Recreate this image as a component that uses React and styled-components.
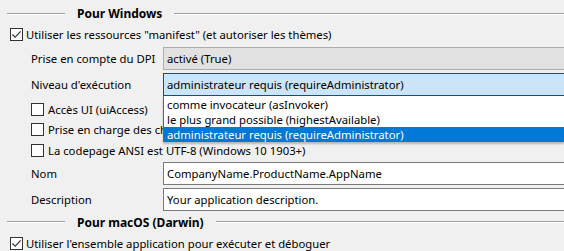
import React from "react";
import styled, { createGlobalStyle } from "styled-components";

const Global = createGlobalStyle`
  html, body { margin: 0; padding: 0; background: #f0f0f0; overflow: hidden; }
  body { font-family: "Noto Sans", "Open Sans", sans-serif; font-size: 11.3px; color: #000; }
`;

const Page = styled.div`
  position: relative;
  width: 100%;
  height: 251px;
  overflow: hidden;
  display: flex;
  flex-direction: column;
`;

const SectionHeader = styled.div`
  height: ${(p) => p.$h}px;
  display: flex;
  align-items: center;
  padding-left: 7px;
  gap: 12px;
  &::before, &::after {
    content: "";
    height: 0;
    border-top: 1px solid #a0a0a0;
    border-bottom: 1px solid #ffffff;
  }
  &::before { width: 58px; }
  &::after { flex: 1; }
`;

const HeaderText = styled.span`
  font-weight: 700;
  font-size: 12px;
  white-space: nowrap;
`;

const CheckRow = styled.label`
  display: flex;
  align-items: center;
  height: ${(p) => p.$h || 15}px;
  margin-top: ${(p) => p.$mt || 0}px;
  padding-left: ${(p) => p.$indent}px;
  gap: ${(p) => p.$gap || 3}px;
  white-space: nowrap;
  ${(p) => (p.$clip ? `width: ${p.$clip}px; box-sizing: border-box; overflow: hidden;` : "")}
`;

const Box = styled.span`
  width: 11px;
  height: 11px;
  border: 1px solid #333333;
  background: #ffffff;
  display: flex;
  align-items: center;
  justify-content: center;
  flex: none;
`;

const FieldRow = styled.div`
  display: grid;
  grid-template-columns: 132px 1fr;
  align-items: center;
  height: 23px;
  margin-top: ${(p) => p.$mt}px;
  padding-left: 31px;
  position: relative;
`;

const Label = styled.span`
  white-space: nowrap;
`;

const Control = styled.div`
  box-sizing: border-box;
  height: 23px;
  display: flex;
  align-items: center;
  padding-left: 3px;
  white-space: nowrap;
  overflow: hidden;
  border: 1px solid ${(p) => p.$border};
  border-right: none;
  background: ${(p) => p.$bg};
`;

const Dropdown = styled.div`
  position: absolute;
  left: 163px;
  top: 23px;
  right: 0;
  background: #ffffff;
  border-left: 1px solid #646464;
  box-shadow: 0 2px 2px rgba(0, 0, 0, 0.25);
  z-index: 2;
`;

const Item = styled.div`
  height: 15px;
  line-height: 15px;
  padding-left: 3px;
  white-space: nowrap;
  background: ${(p) => (p.$sel ? "#0078d7" : "transparent")};
  color: ${(p) => (p.$sel ? "#ffffff" : "#000000")};
  &:first-child { margin-top: 1px; }
`;

const Check = () => (
  <svg width="11" height="11" viewBox="0 0 11 11">
    <path d="M1.5 5.5 L4.2 8.3 L9.6 2.4" fill="none" stroke="#222" strokeWidth="1.1" />
  </svg>
);

const CheckBox = ({ checked }) => <Box>{checked && <Check />}</Box>;

export default function App() {
  return (
    <>
      <Global />
      <Page>
        <SectionHeader $h={28}>
          <HeaderText>Pour Windows</HeaderText>
        </SectionHeader>
        <CheckRow $indent={10}>
          <CheckBox checked />
          Utiliser les ressources "manifest" (et autoriser les thèmes)
        </CheckRow>
        <FieldRow $mt={5}>
          <Label>Prise en compte du DPI</Label>
          <Control $border="#adadad" $bg="#e1e1e1">activé (True)</Control>
        </FieldRow>
        <FieldRow $mt={3}>
          <Label>Niveau d'exécution</Label>
          <Control $border="#005499" $bg="#cce4f7">administrateur requis (requireAdministrator)</Control>
          <Dropdown>
            <Item>comme invocateur (asInvoker)</Item>
            <Item>le plus grand possible (highestAvailable)</Item>
            <Item $sel>administrateur requis (requireAdministrator)</Item>
          </Dropdown>
        </FieldRow>
        <CheckRow $indent={31} $h={21} $mt={3} $gap={4}>
          <CheckBox />
          Accès UI (uiAccess)
        </CheckRow>
        <CheckRow $indent={31} $h={21} $gap={4} $clip={163}>
          <CheckBox />
          Prise en charge des chemins longs
        </CheckRow>
        <CheckRow $indent={31} $h={21} $gap={4}>
          <CheckBox />
          La codepage ANSI est UTF-8 (Windows 10 1903+)
        </CheckRow>
        <FieldRow $mt={1}>
          <Label>Nom</Label>
          <Control $border="#7a7a7a" $bg="#ffffff">CompanyName.ProductName.AppName</Control>
        </FieldRow>
        <FieldRow $mt={3}>
          <Label>Description</Label>
          <Control $border="#7a7a7a" $bg="#ffffff">Your application description.</Control>
        </FieldRow>
        <SectionHeader $h={24}>
          <HeaderText>Pour macOS (Darwin)</HeaderText>
        </SectionHeader>
        <CheckRow $indent={10} $mt={2}>
          <CheckBox checked />
          Utiliser l'ensemble application pour exécuter et déboguer
        </CheckRow>
      </Page>
    </>
  );
}
